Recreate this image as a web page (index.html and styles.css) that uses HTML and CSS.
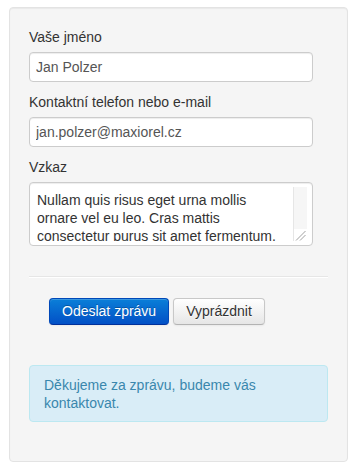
FILE: index.html
```html
<!DOCTYPE html>
<html lang="cs">
<head>
<meta charset="utf-8">
<title>Kontakt</title>
<link rel="stylesheet" href="styles.css">
</head>
<body>
<div class="page">
  <form class="well">
    <label class="field-label" for="name">Vaše jméno</label>
    <input class="field-input" id="name" type="text" value="Jan Polzer">
    <label class="field-label" for="contact">Kontaktní telefon nebo e-mail</label>
    <input class="field-input" id="contact" type="text" value="jan.polzer@maxiorel.cz">
    <label class="field-label" for="msg">Vzkaz</label>
    <div class="textarea-box">
      <textarea class="field-textarea" id="msg">Nullam quis risus eget urna mollis ornare vel eu leo. Cras mattis consectetur purus sit amet fermentum.</textarea>
      <div class="scroll-track" aria-hidden="true">
        <svg class="grip" width="14" height="12" viewBox="0 0 14 12">
          <path d="M3 11.5 L12.5 2" stroke="#a0a0a0" stroke-width="1" fill="none"/>
          <path d="M7 11.5 L12.5 6" stroke="#a0a0a0" stroke-width="1" fill="none"/>
        </svg>
      </div>
    </div>
    <hr class="divider">
    <div class="actions">
      <button type="button" class="btn btn-primary">Odeslat zprávu</button>
      <button type="button" class="btn">Vyprázdnit</button>
    </div>
    <div class="alert-info">Děkujeme za zprávu, budeme vás kontaktovat.</div>
  </form>
</div>
</body>
</html>
```
FILE: styles.css
```css
* { box-sizing: border-box; }
html, body { margin: 0; padding: 0; background: #fff; }
body {
  font-family: "Liberation Sans", Arial, sans-serif;
  font-size: 14px;
  line-height: 20px;
  color: #333;
}
.page { padding: 7px 12px 0 9px; }
.well {
  display: flex;
  flex-direction: column;
  align-items: flex-start;
  width: 339px;
  padding: 19px;
  background: #f5f5f5;
  border: 1px solid #e3e3e3;
  border-radius: 4px;
  box-shadow: inset 0 1px 1px rgba(0,0,0,0.05);
}
.field-label {
  display: block;
  line-height: 20px;
  margin-bottom: 5px;
}
.field-input {
  display: block;
  width: 284px;
  height: 30px;
  padding: 4px 6px;
  margin: 0 0 10px 0;
  font: inherit;
  line-height: 20px;
  color: #555;
  background: #fff;
  border: 1px solid #ccc;
  border-radius: 4px;
  box-shadow: inset 0 1px 1px rgba(0,0,0,0.075);
  outline: none;
}
.textarea-box {
  display: flex;
  width: 284px;
  height: 64px;
  padding: 4px 5px 4px 4px;
  margin-bottom: 10px;
  background: #fff;
  border: 1px solid #ccc;
  border-radius: 4px;
  box-shadow: inset 0 1px 1px rgba(0,0,0,0.075);
}
.field-textarea {
  display: block;
  flex: 1;
  min-width: 0;
  height: 54px;
  margin: 0;
  padding: 4px 6px 0 3px;
  border: 0;
  font: inherit;
  line-height: 18px;
  color: #333;
  background: transparent;
  overflow: hidden;
  resize: none;
  outline: none;
}
.scroll-track {
  display: flex;
  flex-direction: column;
  justify-content: flex-end;
  width: 14px;
  height: 54px;
  background: linear-gradient(#f6f6f6, #f6f6f6) top / 100% 42px no-repeat, #fff;
  border-left: 1px solid #e6e6e6;
}
.grip { display: block; margin-left: -1px; }
.divider {
  align-self: stretch;
  margin: 20px 0;
  border: 0;
  border-top: 1px solid #e6e6e6;
  border-bottom: 1px solid #fff;
}
.actions {
  display: flex;
  gap: 4px;
  margin: 0 0 40px 20px;
}
.btn {
  display: inline-block;
  height: 27px;
  padding: 3px 12px;
  font: inherit;
  line-height: 19px;
  color: #333;
  text-shadow: 0 1px 1px rgba(255,255,255,0.75);
  background: linear-gradient(#ffffff, #e6e6e6);
  border: 1px solid #c8c8c8;
  border-bottom-color: #b3b3b3;
  border-radius: 4px;
  box-shadow: inset 0 1px 0 rgba(255,255,255,0.2), 0 1px 2px rgba(0,0,0,0.05);
  cursor: pointer;
}
.btn-primary {
  color: #fff;
  text-shadow: 0 -1px 0 rgba(0,0,0,0.25);
  background: linear-gradient(#0a7fd8, #0250c6);
  border-color: #0048b8 #0048b8 #00309a;
}
.alert-info {
  align-self: stretch;
  padding: 10px 35px 9px 14px;
  line-height: 18px;
  color: #3a87ad;
  background: #d9edf7;
  border: 1px solid #bce8f1;
  border-radius: 4px;
  margin-bottom: 20px;
}
```
